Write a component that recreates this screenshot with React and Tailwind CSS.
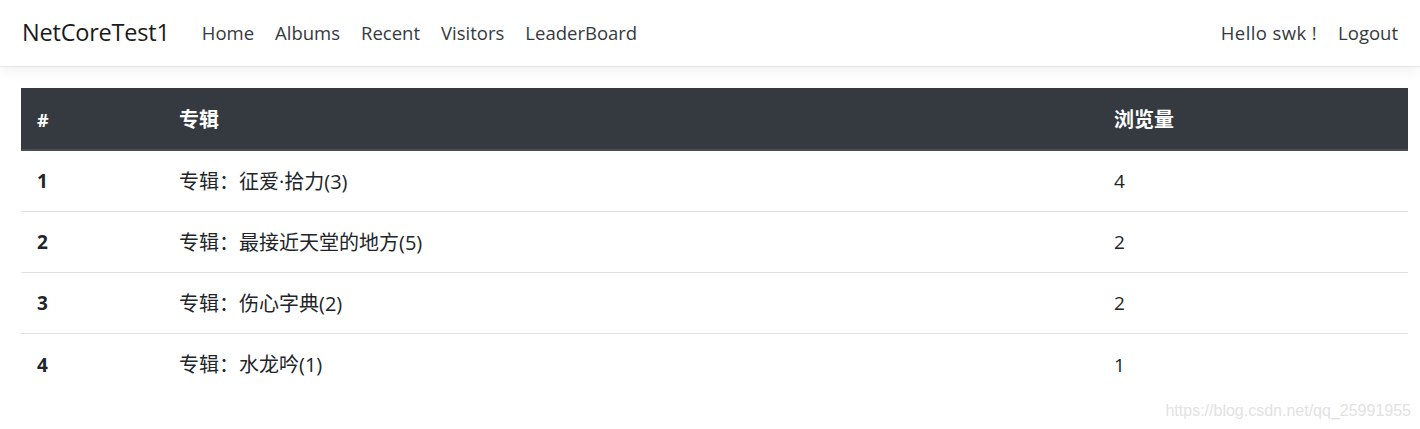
import React from "react";

const rows = [
  { n: 1, name: "专辑：征爱·拾力(3)", v: 4 },
  { n: 2, name: "专辑：最接近天堂的地方(5)", v: 2 },
  { n: 3, name: "专辑：伤心字典(2)", v: 2 },
  { n: 4, name: "专辑：水龙吟(1)", v: 1 },
];

const font = { fontFamily: '"Open Sans", "Noto Sans CJK SC", sans-serif' };

export default function App() {
  return (
    <div className="relative w-[1420px] h-[429px] bg-white overflow-hidden text-[#212529]" style={font}>
      <nav className="h-[67px] border-b border-[#e5e5e5] shadow-[0_4px_14px_rgba(0,0,0,0.06)] flex items-center justify-between pl-[22px] pr-[22px] bg-white relative z-10">
        <div className="flex items-center">
          <span className="text-[23.5px] text-[#1a1a1a] mr-[32px] tracking-[-0.2px]">NetCoreTest1</span>
          <div className="flex items-center gap-[21px] text-[18.5px] text-[#343a40]">
            <span>Home</span>
            <span>Albums</span>
            <span>Recent</span>
            <span>Visitors</span>
            <span>LeaderBoard</span>
          </div>
        </div>
        <div className="flex items-center gap-[21px] text-[18.5px] text-[#343a40]">
          <span className="tracking-[0.4px]">Hello swk !</span>
          <span>Logout</span>
        </div>
      </nav>
      <div className="pt-[21px] pl-[21px] pr-[12px]">
        <div className="w-[1387px]">
          <div className="grid grid-cols-[142px_935px_1fr] h-[63px] pt-[3px] bg-[#343a40] border-b-2 border-[#454d55] text-white font-bold text-[20px] items-center">
            <div className="pl-[16px] text-[18px]">#</div>
            <div className="pl-[16px]">专辑</div>
            <div className="pl-[16px]">浏览量</div>
          </div>
          {rows.map((r, i) => (
            <div
              key={r.n}
              className={`grid grid-cols-[142px_935px_1fr] h-[61px] pt-[1px] items-center text-[19px] ${i < rows.length - 1 ? "border-b border-[#dee2e6]" : ""}`}
            >
              <div className="pl-[16px] font-bold">{r.n}</div>
              <div className="pl-[16px] text-[20px]">{r.name}</div>
              <div className="pl-[16px]">{r.v}</div>
            </div>
          ))}
        </div>
      </div>
      <div
        className="absolute right-[9px] top-[399px] text-[16px] text-[#e2e2e2]"
        style={{ fontFamily: '"Liberation Sans", Arial, sans-serif' }}
      >
        https://blog.csdn.net/qq_25991955
      </div>
    </div>
  );
}
